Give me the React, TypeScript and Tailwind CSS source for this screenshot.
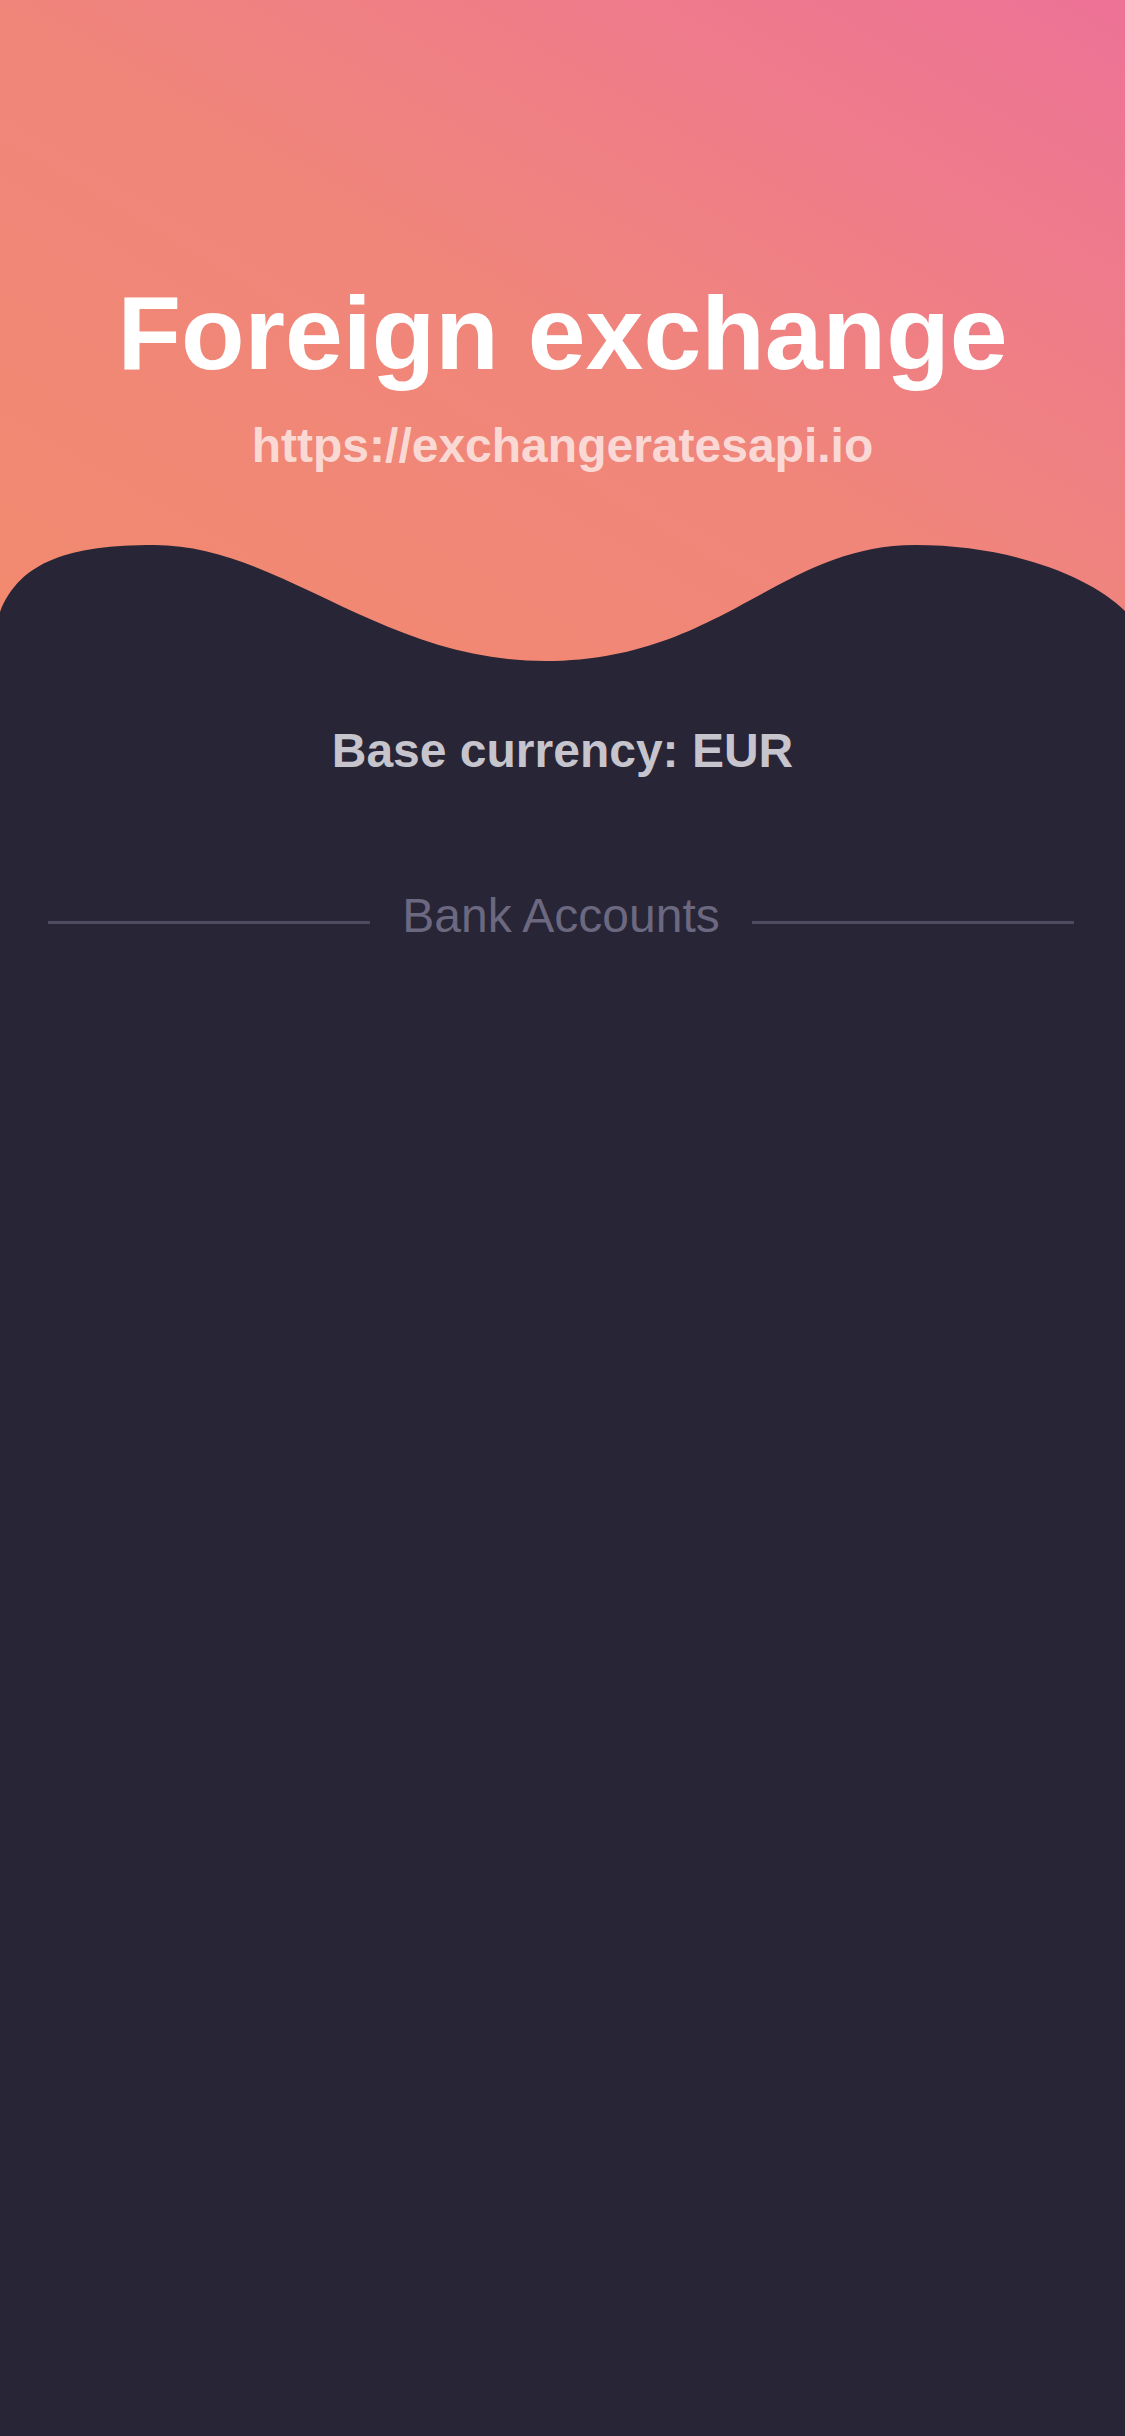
import React from "react";

// 波形の区切り（ヘッダー下端）
function Wave() {
  return (
    <svg
      className="absolute bottom-0 left-0 block"
      width="1125"
      height="122"
      viewBox="0 0 1125 122"
      preserveAspectRatio="none"
    >
      <path
        d="M0,71 C20,20 70,4 154,4 C280,4 380,120 545,120 C720,120 780,4 915,4 C1010,4 1090,35 1125,70 L1125,122 L0,122 Z"
        fill="#272536"
      />
    </svg>
  );
}

function SectionTitle({ label }: { label: string }) {
  return (
    <div className="flex items-center pl-[48px] pr-[51px]">
      <div className="flex-1 h-[3px] mt-3 bg-[#4d4a62]" />
      <span className="px-[32px] text-[48px] leading-none text-[#6b6880]">{label}</span>
      <div className="flex-1 h-[3px] mt-3 bg-[#4d4a62]" />
    </div>
  );
}

export default function App() {
  return (
    <div
      className="min-h-[2436px] w-full bg-[#272536]"
      style={{ fontFamily: '"Liberation Sans", Arial, sans-serif' }}
    >
      {/* ヘッダー */}
      <header className="relative h-[663px] overflow-hidden bg-linear-to-tr from-[#f28a6e] via-[#f0857b] to-[#ed7296]">
        <div className="flex flex-col items-center pt-[281px]">
          <h1 className="text-[104px] leading-none font-bold text-white">Foreign exchange</h1>
          <p className="mt-[37px] text-[48px] leading-none font-bold text-white/70">
            https://exchangeratesapi.io
          </p>
        </div>
        <Wave />
      </header>

      {/* 本文 */}
      <main className="pt-[64px]">
        <p className="text-center text-[48px] leading-none font-bold text-[#c6c4cc]">
          Base currency: EUR
        </p>
        <div className="mt-[117px]">
          <SectionTitle label="Bank Accounts" />
        </div>
      </main>
    </div>
  );
}
